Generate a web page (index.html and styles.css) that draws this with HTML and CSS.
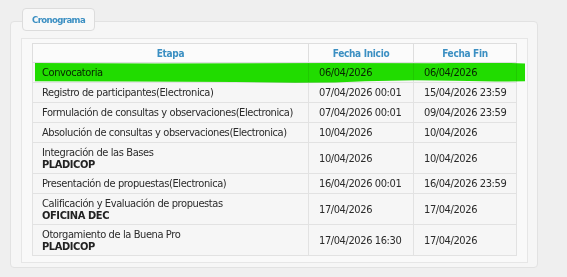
FILE: index.html
```html
<!DOCTYPE html>
<html lang="es">
  <head>
    <meta charset="utf-8" />
    <meta name="viewport" content="width=device-width, initial-scale=1" />
    <title>Cronograma</title>
    <link rel="stylesheet" href="styles.css">
  </head>
  <body>
    <section class="panel">
      <h2 class="tab">Cronograma</h2>
      <div class="box">
        <table class="schedule">
          <colgroup>
            <col class="col-stage">
            <col class="col-date">
            <col>
          </colgroup>
          <thead>
            <tr>
              <th>Etapa</th>
              <th>Fecha Inicio</th>
              <th>Fecha Fin</th>
            </tr>
          </thead>
          <tbody>
            <tr class="marked">
              <td>Convocatoria</td>
              <td>06/04/2026</td>
              <td>06/04/2026
                <svg class="marker" viewBox="0 0 490 22" preserveAspectRatio="none" aria-hidden="true">
                  <path d="M0 0 L120 0.5 L300 0 L400 0.3 L440 -0.5 L470 -0.2 L490 0.5 L490 19 L460 19.5 L420 18.5 L380 18.2 L330 19.2 L300 20.5 L260 20.8 L200 20 L100 19.5 L0 19 Z" />
                </svg>
              </td>
            </tr>
            <tr>
              <td>Registro de participantes(Electronica)</td>
              <td>07/04/2026 00:01</td>
              <td>15/04/2026 23:59</td>
            </tr>
            <tr>
              <td>Formulación de consultas y observaciones(Electronica)</td>
              <td>07/04/2026 00:01</td>
              <td>09/04/2026 23:59</td>
            </tr>
            <tr>
              <td>Absolución de consultas y observaciones(Electronica)</td>
              <td>10/04/2026</td>
              <td>10/04/2026</td>
            </tr>
            <tr>
              <td>Integración de las Bases<b>PLADICOP</b></td>
              <td>10/04/2026</td>
              <td>10/04/2026</td>
            </tr>
            <tr>
              <td>Presentación de propuestas(Electronica)</td>
              <td>16/04/2026 00:01</td>
              <td>16/04/2026 23:59</td>
            </tr>
            <tr>
              <td>Calificación y Evaluación de propuestas<b>OFICINA DEC</b></td>
              <td>17/04/2026</td>
              <td>17/04/2026</td>
            </tr>
            <tr>
              <td>Otorgamiento de la Buena Pro<b>PLADICOP</b></td>
              <td>17/04/2026 16:30</td>
              <td>17/04/2026</td>
            </tr>
          </tbody>
        </table>
      </div>
    </section>
  </body>
</html>
```

FILE: styles.css
```css
body {
  margin: 0;
  background-color: #efefef;
  color: #2b2b2b;
  font-family: "DejaVu Sans Condensed", "DejaVu Sans", sans-serif;
  font-size: 11px;
  letter-spacing: -0.4px;
}

.panel {
  width: 507px;
  margin: 21px 0 0 10px;
  padding: 0 9px 4px 10px;
  background-color: #f6f6f6;
  border: 1px solid #e2e2e2;
  border-radius: 4px;
}

.tab {
  width: fit-content;
  margin: -14px 0 0 1px;
  padding: 0 9px;
  height: 21px;
  line-height: 21px;
  font-size: 9.5px;
  font-weight: bold;
  letter-spacing: -0.6px;
  color: #3b8fc2;
  background-color: #f8f8f8;
  border: 1px solid #dcdcdc;
  border-radius: 4px;
}

.box {
  margin-top: 7px;
  padding: 4px 10px 6px;
  background-color: #f9f9f9;
  border: 1px solid #e6e6e6;
}

.schedule {
  width: 100%;
  border-collapse: collapse;
  table-layout: fixed;
  border: 1px solid #dadada;
}

.col-stage {
  width: 276px;
}

.col-date {
  width: 105px;
}

.schedule th {
  height: 18px;
  padding: 0;
  font-size: 10px;
  letter-spacing: -0.3px;
  color: #3b8fc2;
  font-weight: bold;
  text-align: center;
  background-color: #fbfbfb;
  border: 1px solid #dedede;
}

.schedule td {
  padding: 4px 9px 3px;
  line-height: 12px;
  white-space: nowrap;
  background-color: #f6f6f6;
  border: 1px solid #e2e2e2;
}

.schedule td + td {
  padding-left: 10px;
}

/* second line of a stage: the area in charge */
.schedule b {
  display: block;
  line-height: 11px;
  color: #222;
}

/* highlighter stroke over the first row */
.marked td:last-child {
  position: relative;
}

.marker {
  position: absolute;
  left: -379px;
  top: 0;
  width: 490px;
  height: 21px;
  mix-blend-mode: multiply;
  pointer-events: none;
}

.marker path {
  fill: #22e400;
}
```
